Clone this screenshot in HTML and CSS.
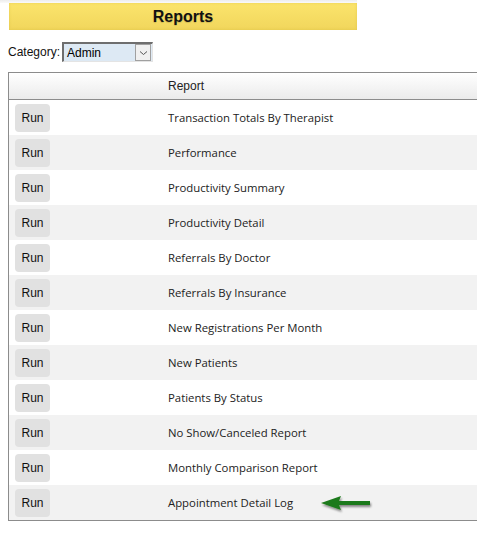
FILE: index.html
```html
<!DOCTYPE html>
<html>
<head>
<meta charset="utf-8">
<link rel="stylesheet" href="styles.css">
</head>
<body>
<div class="topline"></div>
<div class="title-bar"><span class="title">Reports</span></div>
<div class="category">
  <span class="cat-label">Category:</span>
  <div class="select">
    <span class="select-value">Admin</span>
    <span class="select-btn">
      <svg width="9" height="6" viewBox="0 0 9 6"><path d="M1 1.5 L4.5 4.5 L8 1.5" fill="none" stroke="#555" stroke-width="1"/></svg>
    </span>
  </div>
</div>
<div class="table">
  <div class="thead">
    <div class="c1"></div>
    <div class="c2">Report</div>
  </div>
  <div class="row"><div class="c1"><span class="run">Run</span></div><div class="c2 name">Transaction Totals By Therapist</div></div>
  <div class="row"><div class="c1"><span class="run">Run</span></div><div class="c2 name">Performance</div></div>
  <div class="row"><div class="c1"><span class="run">Run</span></div><div class="c2 name">Productivity Summary</div></div>
  <div class="row"><div class="c1"><span class="run">Run</span></div><div class="c2 name">Productivity Detail</div></div>
  <div class="row"><div class="c1"><span class="run">Run</span></div><div class="c2 name">Referrals By Doctor</div></div>
  <div class="row"><div class="c1"><span class="run">Run</span></div><div class="c2 name">Referrals By Insurance</div></div>
  <div class="row"><div class="c1"><span class="run">Run</span></div><div class="c2 name">New Registrations Per Month</div></div>
  <div class="row"><div class="c1"><span class="run">Run</span></div><div class="c2 name">New Patients</div></div>
  <div class="row"><div class="c1"><span class="run">Run</span></div><div class="c2 name">Patients By Status</div></div>
  <div class="row"><div class="c1"><span class="run">Run</span></div><div class="c2 name">No Show/Canceled Report</div></div>
  <div class="row"><div class="c1"><span class="run">Run</span></div><div class="c2 name">Monthly Comparison Report</div></div>
  <div class="row"><div class="c1"><span class="run">Run</span></div><div class="c2 name">Appointment Detail Log
    <svg class="arrow" width="56" height="22" viewBox="0 0 56 22">
      <defs>
        <filter id="sh" x="-20%" y="-40%" width="140%" height="180%">
          <feGaussianBlur in="SourceAlpha" stdDeviation="1.3"/>
          <feOffset dx="1" dy="2" result="b"/>
          <feComponentTransfer><feFuncA type="linear" slope="0.45"/></feComponentTransfer>
          <feMerge><feMergeNode/><feMergeNode in="SourceGraphic"/></feMerge>
        </filter>
      </defs>
      <path d="M1 8 L21 1 L19 6 L50 6 L50 10 L19 10 L21 15 Z" fill="#1e7a1b" filter="url(#sh)"/>
    </svg>
  </div></div>
</div>
</body>
</html>
```

FILE: styles.css
```css
html, body {
  margin: 0;
  padding: 0;
  background: #fff;
  overflow: hidden;
}
body {
  font-family: "Liberation Sans", Arial, sans-serif;
  font-size: 12px;
  color: #111;
}
.topline {
  height: 3px;
  background: linear-gradient(#ececec, #fafafa);
  width: 357px;
}
.title-bar {
  margin-left: 9px;
  width: 348px;
  height: 27px;
  background: linear-gradient(#fbe46c, #f1d65c);
  box-shadow: inset 0 0 3px rgba(200, 170, 40, 0.35);
  display: flex;
  align-items: center;
  justify-content: center;
}
.title {
  font-weight: bold;
  font-size: 16px;
  color: #111;
  text-shadow: 0 1px 1px rgba(0,0,0,0.15);
}
.category {
  display: flex;
  align-items: center;
  margin: 12px 0 0 8px;
  height: 20px;
}
.cat-label {
  width: 54px;
}
.select {
  display: flex;
  align-items: center;
  width: 88px;
  height: 17px;
  background: #dde9f4;
  border-top: 2px solid #6e6e6e;
  border-left: 2px solid #6e6e6e;
  border-right: 1px solid #e4e4e4;
  border-bottom: 1px solid #e4e4e4;
}
.select-value {
  flex: 1;
  padding-left: 3px;
  font-size: 12px;
  color: #000;
}
.select-btn {
  width: 14px;
  height: 15px;
  margin-right: 1px;
  border: 1px solid #a0a0a0;
  background: #f0f0f0;
  display: flex;
  align-items: center;
  justify-content: center;
}
.table {
  margin: 10px 0 0 8px;
  width: 480px;
  border-top: 1px solid #8c8c8c;
  border-left: 1px solid #8c8c8c;
  border-bottom: 1px solid #8c8c8c;
}
.thead {
  display: flex;
  align-items: center;
  height: 26px;
  background: linear-gradient(#ffffff, #ebebeb);
  border-bottom: 1px solid #8c8c8c;
  color: #222;
}
.c1 {
  width: 159px;
  display: flex;
  align-items: center;
  padding-left: 6px;
  box-sizing: border-box;
}
.c2 {
  flex: 1;
  display: flex;
  align-items: center;
}
.row {
  display: flex;
  align-items: center;
  height: 35px;
}
.row:nth-child(odd) {
  background: #f2f2f2;
}
.run {
  display: inline-flex;
  align-items: center;
  justify-content: center;
  width: 35px;
  height: 28px;
  background: #e1e1e1;
  border-radius: 4px;
  color: #111;
  font-size: 12px;
}
.name {
  font-family: "Open Sans", sans-serif;
  font-size: 11.35px;
  color: #222;
}
.arrow {
  margin-left: 27px;
  margin-top: 6px;
}
```
